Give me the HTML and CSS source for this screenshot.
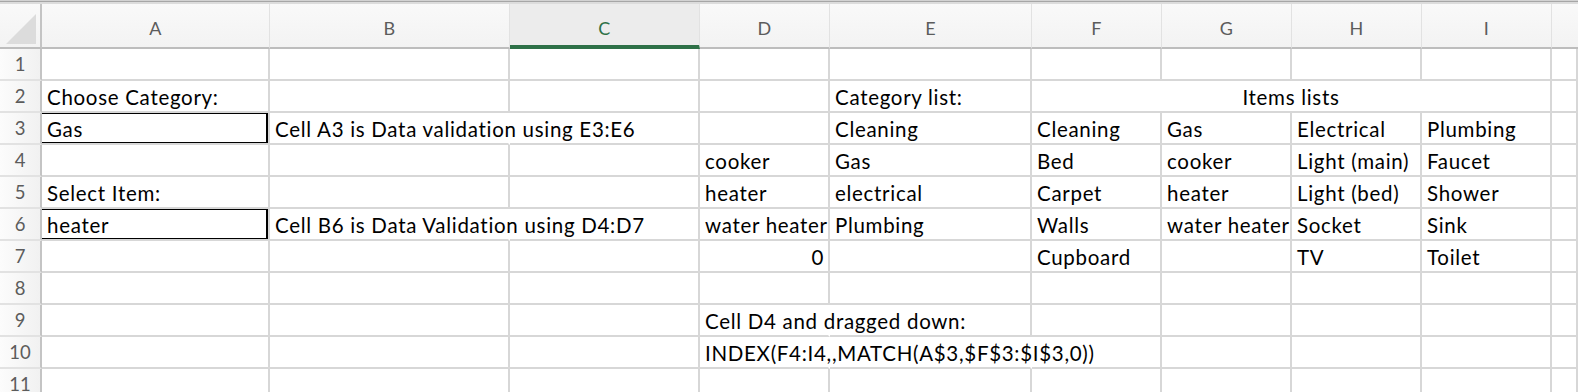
FILE: index.html
```html
<!DOCTYPE html>
<html lang="en">

<head>
  <meta charset="UTF-8" />
  <title>Data validation - dependent list</title>
  <link rel="stylesheet" href="styles.css">
</head>

<body>
  <div class="topbar"></div>
  <div class="sheet">
    <!-- column headers -->
    <div class="corner"><span class="corner-tri"></span></div>
    <div class="col-head">A</div>
    <div class="col-head">B</div>
    <div class="col-head selected">C</div>
    <div class="col-head">D</div>
    <div class="col-head">E</div>
    <div class="col-head">F</div>
    <div class="col-head">G</div>
    <div class="col-head">H</div>
    <div class="col-head">I</div>
    <div class="col-head last"></div>

    <!-- row 1 -->
    <div class="row-head">1</div>
    <div class="cell"></div><div class="cell"></div><div class="cell"></div><div class="cell"></div><div class="cell"></div>
    <div class="cell"></div><div class="cell"></div><div class="cell"></div><div class="cell"></div><div class="cell"></div>

    <!-- row 2 -->
    <div class="row-head">2</div>
    <div class="cell">Choose Category:</div>
    <div class="cell"></div><div class="cell"></div><div class="cell"></div>
    <div class="cell">Category list:</div>
    <div class="cell merged">Items lists</div>
    <div class="cell"></div>

    <!-- row 3 -->
    <div class="row-head">3</div>
    <div class="cell boxed">Gas</div>
    <div class="cell spill">Cell A3 is Data validation using E3:E6</div>
    <div class="cell"></div><div class="cell"></div>
    <div class="cell">Cleaning</div>
    <div class="cell">Cleaning</div>
    <div class="cell">Gas</div>
    <div class="cell">Electrical</div>
    <div class="cell">Plumbing</div>
    <div class="cell"></div>

    <!-- row 4 -->
    <div class="row-head">4</div>
    <div class="cell"></div><div class="cell"></div><div class="cell"></div>
    <div class="cell">cooker</div>
    <div class="cell">Gas</div>
    <div class="cell">Bed</div>
    <div class="cell">cooker</div>
    <div class="cell">Light (main)</div>
    <div class="cell">Faucet</div>
    <div class="cell"></div>

    <!-- row 5 -->
    <div class="row-head">5</div>
    <div class="cell">Select Item:</div>
    <div class="cell"></div><div class="cell"></div>
    <div class="cell">heater</div>
    <div class="cell">electrical</div>
    <div class="cell">Carpet</div>
    <div class="cell">heater</div>
    <div class="cell">Light (bed)</div>
    <div class="cell">Shower</div>
    <div class="cell"></div>

    <!-- row 6 -->
    <div class="row-head">6</div>
    <div class="cell boxed">heater</div>
    <div class="cell spill">Cell B6 is Data Validation using D4:D7</div>
    <div class="cell"></div>
    <div class="cell">water heater</div>
    <div class="cell">Plumbing</div>
    <div class="cell">Walls</div>
    <div class="cell">water heater</div>
    <div class="cell">Socket</div>
    <div class="cell">Sink</div>
    <div class="cell"></div>

    <!-- row 7 -->
    <div class="row-head">7</div>
    <div class="cell"></div><div class="cell"></div><div class="cell"></div>
    <div class="cell num">0</div>
    <div class="cell"></div>
    <div class="cell">Cupboard</div>
    <div class="cell"></div>
    <div class="cell">TV</div>
    <div class="cell">Toilet</div>
    <div class="cell"></div>

    <!-- row 8 -->
    <div class="row-head">8</div>
    <div class="cell"></div><div class="cell"></div><div class="cell"></div><div class="cell"></div><div class="cell"></div>
    <div class="cell"></div><div class="cell"></div><div class="cell"></div><div class="cell"></div><div class="cell"></div>

    <!-- row 9 -->
    <div class="row-head">9</div>
    <div class="cell"></div><div class="cell"></div><div class="cell"></div>
    <div class="cell spill">Cell D4 and dragged down:</div>
    <div class="cell"></div><div class="cell"></div><div class="cell"></div><div class="cell"></div><div class="cell"></div><div class="cell"></div>

    <!-- row 10 -->
    <div class="row-head">10</div>
    <div class="cell"></div><div class="cell"></div><div class="cell"></div>
    <div class="cell spill">INDEX(F4:I4,,MATCH(A$3,$F$3:$I$3,0))</div>
    <div class="cell spill"></div>
    <div class="cell"></div><div class="cell"></div><div class="cell"></div><div class="cell"></div><div class="cell"></div>

    <!-- row 11 -->
    <div class="row-head">11</div>
    <div class="cell"></div><div class="cell"></div><div class="cell"></div><div class="cell"></div><div class="cell"></div>
    <div class="cell"></div><div class="cell"></div><div class="cell"></div><div class="cell"></div><div class="cell"></div>
  </div>
</body>

</html>
```

FILE: styles.css
```css
body {
  margin: 0;
  background: #fff;
  font-family: Lato, 'Liberation Sans', sans-serif;
  overflow: hidden;
}

.topbar {
  height: 4px;
  background: linear-gradient(#d2d2d2 0, #d2d2d2 1px, #a6a6a6 1px, #a6a6a6 2px, #dcdcdc 2px);
}

.sheet {
  display: grid;
  grid-template-columns: 42px 228px 240px 190px 130px 202px 130px 130px 130px 130px 1fr;
  grid-template-rows: 45px repeat(11, 32px);
}

/* headers */
.corner,
.col-head {
  background: linear-gradient(#f9f9f9, #f3f3f3);
  border-bottom: 2px solid #bdbdbd;
  border-right: 1px solid #e2e2e2;
  box-sizing: border-box;
}

.corner {
  position: relative;
  border-right: 2px solid #c4c4c4;
}

.corner-tri {
  position: absolute;
  left: 6px;
  top: 10px;
  width: 30px;
  height: 30px;
  background: #dcdcdc;
  clip-path: polygon(100% 0, 100% 100%, 0 100%);
}

.col-head {
  display: flex;
  align-items: center;
  justify-content: center;
  padding-top: 4px;
  font-size: 18px;
  letter-spacing: 0.3px;
  color: #5c5c5c;
}

.col-head.selected {
  background: #ececec;
  color: #2e7047;
  border-bottom: 4px solid #2e7047;
  padding-top: 6px;
}

.col-head.last {
  border-right: none;
}

.row-head {
  display: flex;
  align-items: center;
  justify-content: center;
  font-size: 18.5px;
  color: #5c5c5c;
  background: linear-gradient(90deg, #fcfcfc, #f1f1f1);
  border-right: 2px solid #c4c4c4;
  border-bottom: 2px solid #e2e2e2;
  box-sizing: border-box;
}

/* cells */
.cell {
  position: relative;
  display: flex;
  align-items: flex-end;
  padding: 0 5px 4px 5px;
  border-right: 2px solid #d7d7d7;
  border-bottom: 2px solid #d7d7d7;
  box-sizing: border-box;
  font-size: 20.5px;
  letter-spacing: 0.7px;
  line-height: 1;
  color: #000;
  white-space: nowrap;
  overflow: hidden;
  min-width: 0;
}

.cell.spill {
  overflow: visible;
  border-right-color: transparent;
}

.cell.num {
  justify-content: flex-end;
  padding-right: 4px;
}

.cell.merged {
  grid-column: span 4;
  justify-content: center;
}

.cell.boxed::after {
  content: "";
  position: absolute;
  left: -2px;
  top: -1px;
  right: 0;
  bottom: -1px;
  border: 2px solid #000;
}
```
